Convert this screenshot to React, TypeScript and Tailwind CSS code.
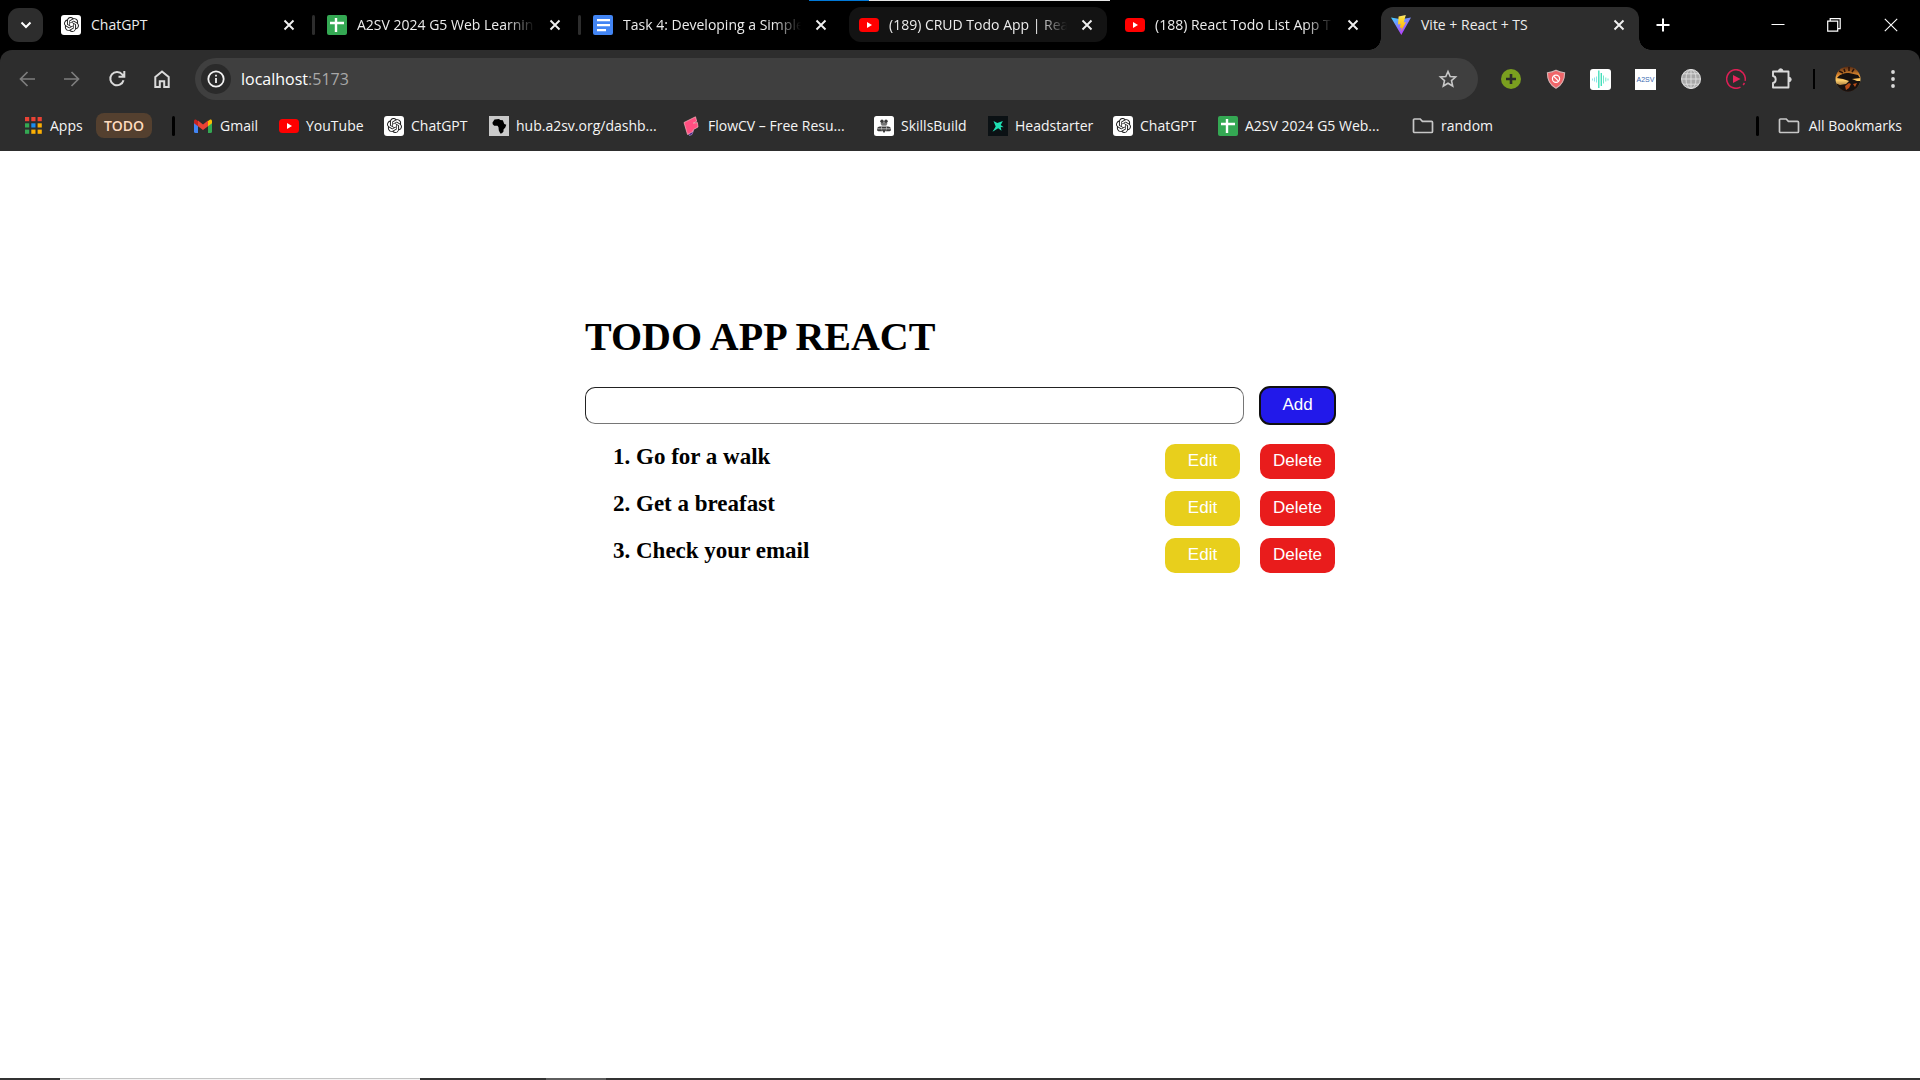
import React, { useState } from "react";
import { SiOpenai } from "react-icons/si";

function ChatGptIcon() {
  return (
    <span className="grid size-5 shrink-0 place-items-center rounded-[3px] bg-white text-[#1d1d1d]">
      <SiOpenai size={15} />
    </span>
  );
}

function SheetsIcon() {
  return (
    <svg viewBox="0 0 20 20" className="size-5 shrink-0">
      <rect width="20" height="20" rx="2" fill="#34a853" />
      <path d="M9 3v14M3 8h14" stroke="#fff" strokeWidth="2.4" />
    </svg>
  );
}

function DocsIcon() {
  return (
    <svg viewBox="0 0 20 20" className="size-5 shrink-0">
      <rect width="20" height="20" rx="2" fill="#4285f4" />
      <path d="M4 5.2h13M4 10.2h13M4 15.2h9" stroke="#fff" strokeWidth="2.2" />
    </svg>
  );
}

function YouTubeIcon() {
  return (
    <svg viewBox="0 0 20 20" className="size-5 shrink-0">
      <rect y="3" width="20" height="14" rx="3.5" fill="#f00" />
      <path d="M8 7l5 3-5 3z" fill="#fff" />
    </svg>
  );
}

function ViteIcon() {
  return (
    <svg viewBox="0 0 20 20" className="size-5 shrink-0">
      <defs>
        <linearGradient id="viteBody" x1="0" y1="0" x2="0.6" y2="1">
          <stop offset="0" stopColor="#41d1ff" />
          <stop offset="1" stopColor="#bd34fe" />
        </linearGradient>
        <linearGradient id="viteBolt" x1="0" y1="0" x2="0" y2="1">
          <stop offset="0" stopColor="#ffea83" />
          <stop offset="0.2" stopColor="#ffdd35" />
          <stop offset="1" stopColor="#ffa800" />
        </linearGradient>
      </defs>
      <path d="M0 2.6l10 1.6L20 2.6 10.3 20z" fill="url(#viteBody)" />
      <path d="M14.8 0L7.6 1.4 7 9.4l2.6-.5-.8 4 2-.5-.7 4.2 4.9-9.6-2.3.4z" fill="url(#viteBolt)" />
    </svg>
  );
}

function GmailIcon() {
  return (
    <svg viewBox="0 0 20 20" className="size-5 shrink-0">
      <path d="M1 5.5v10A1.5 1.5 0 0 0 2.5 17H5V9z" fill="#4285f4" />
      <path d="M19 5.5v10A1.5 1.5 0 0 1 17.5 17H15V9z" fill="#34a853" />
      <path d="M15 5l1.8-1.3C17.8 3 19 3.8 19 5v2.2L15 10.2z" fill="#fbbc04" />
      <path d="M5 5L3.2 3.7C2.2 3 1 3.8 1 5v2.2l4 3z" fill="#c5221f" />
      <path d="M5 10.2V4.6l5 3.9 5-3.9v5.6L10 14z" fill="#ea4335" />
    </svg>
  );
}

function AfricaIcon() {
  return (
    <svg viewBox="0 0 20 20" className="size-5 shrink-0">
      <rect width="20" height="20" fill="#c9c9c9" />
      <path d="M3.500 6.500l2-3L10 3l1.200 1 2.600.3 1.500 3.700 2 .8-1 2.600-1.800 2v2.100L13 17.300l-1.700.3-1.500-3-.3-3.300-1-1.500H5.200L3.700 8.300z" fill="#000" />
    </svg>
  );
}

function FlowIcon() {
  return (
    <svg viewBox="0 0 20 20" className="size-5 shrink-0">
      <path d="M7 17l5.5-2.500-1.500 4-2.500 1z" fill="#3d1a78" stroke="#c9a6e8" strokeWidth=".6" />
      <path d="M3 6.500L14.500.8l1.200 4.500-3.500 1.900 4.200-.7.600 4.500L12.500 13.500l-1 2.300-5 2.700z" fill="#ff4f81" stroke="#ffb3bd" strokeWidth=".7" />
    </svg>
  );
}

function SkillsIcon() {
  return (
    <svg viewBox="0 0 20 20" className="size-5 shrink-0">
      <rect width="20" height="20" rx="2.5" fill="#fff" />
      <g fill="#3a3a3a">
        <circle cx="8" cy="5.2" r="1.7" />
        <circle cx="12" cy="5.2" r="1.7" />
        <rect x="6.8" y="6.6" width="6.4" height="2.4" rx="1" />
        <path d="M3 13.800c0-2.600 1.600-3.600 4-3.200l1 4.600H4.400A1.400 1.400 0 0 1 3 13.800zM17 13.800c0-2.600-1.600-3.600-4-3.200l-1 4.600h3.600a1.400 1.400 0 0 0 1.400-1.400z" />
        <path d="M7.600 9.600h4.800v4.200L10 17l-2.400-3.200z" />
      </g>
      <path d="M3 12.800h14M7 8h6M8 10.400h4" stroke="#fff" strokeWidth=".6" />
    </svg>
  );
}

function HeadstarterIcon() {
  return (
    <svg viewBox="0 0 20 20" className="size-5 shrink-0">
      <rect width="20" height="20" fill="#0b1114" />
      <path d="M5.500 5l3.800 2 5.600-2-2.200 4 3 2.300-3-.2.8 3.700-3.300-2.600-5.700 3.500 3.200-5.200z" fill="#1fe0b3" />
    </svg>
  );
}

function FolderIcon() {
  return (
    <svg viewBox="0 0 22 20" className="h-5 w-[22px] shrink-0" fill="none" stroke="#c7c7c7" strokeWidth="1.7">
      <path d="M1.500 4a1 1 0 0 1 1-1h5.700l2.200 2.400h9.100a1 1 0 0 1 1 1v9.100a1 1 0 0 1-1 1h-17a1 1 0 0 1-1-1z" />
    </svg>
  );
}

function AppsIcon() {
  const colors = ["#ea4335", "#ea4335", "#ea4335", "#34a853", "#1a8cf0", "#fbaf04", "#34a853", "#fbaf04", "#fbaf04"];
  return (
    <svg viewBox="0 0 17 17" className="size-[17px] shrink-0">
      {colors.map((c, i) => (
        <rect key={i} x={(i % 3) * 6.3} y={Math.floor(i / 3) * 6.3} width="4.2" height="4.2" fill={c} />
      ))}
    </svg>
  );
}

function CloseIcon() {
  return (
    <svg viewBox="0 0 12 12" className="size-3" stroke="#f0f0f0" strokeWidth="1.9">
      <path d="M1.500 1.500l9 9M10.500 1.500l-9 9" />
    </svg>
  );
}

const tabs = [
  { icon: <ChatGptIcon />, title: "ChatGPT", kind: "plain", sep: true, fade: false },
  { icon: <SheetsIcon />, title: "A2SV 2024 G5 Web Learnin", kind: "plain", sep: true, fade: true },
  { icon: <DocsIcon />, title: "Task 4: Developing a Simple", kind: "plain", sep: false, fade: true },
  { icon: <YouTubeIcon />, title: "(189) CRUD Todo App | Rea", kind: "hover", sep: false, fade: true },
  { icon: <YouTubeIcon />, title: "(188) React Todo List App T", kind: "plain", sep: false, fade: true },
  { icon: <ViteIcon />, title: "Vite + React + TS", kind: "active", sep: false, fade: false },
];

function Tab({ tab }: { tab: (typeof tabs)[number] }) {
  const active = tab.kind === "active";
  return (
    <div className={"relative flex h-[43px] max-w-[266px] min-w-0 flex-1 items-start " + (active ? "z-10" : "")}>
      <div
        className={
          "mr-2 flex w-full min-w-0 items-center pr-3 pl-[10px] " +
          (active
            ? "h-[43px] rounded-t-[12px] bg-[#2d2d2d] pb-2"
            : tab.kind === "hover"
              ? "h-[35px] rounded-[12px] bg-[#131313]"
              : "h-[35px]")
        }
      >
        {tab.icon}
        <span
          className={
            "ml-[10px] min-w-0 flex-1 whitespace-nowrap " +
            (tab.fade ? "[mask-image:linear-gradient(to_right,black_calc(100%-28px),transparent)]" : "")
          }
        >
          {tab.title}
        </span>
        <button aria-label={"Close " + tab.title} className="ml-3 grid h-5 w-4 shrink-0 place-items-center">
          <CloseIcon />
        </button>
      </div>
      {tab.sep && <i className="absolute top-2 right-[2px] h-5 w-[3px] rounded bg-[#2d2d2d]" />}
      {active && (
        <>
          <i className="absolute bottom-0 -left-3 size-3 bg-[radial-gradient(circle_at_0_0,transparent_11.5px,#2d2d2d_12px)]" />
          <i className="absolute right-[-4px] bottom-0 size-3 bg-[radial-gradient(circle_at_100%_0,transparent_11.5px,#2d2d2d_12px)]" />
        </>
      )}
    </div>
  );
}

function TabStrip() {
  return (
    <header className="flex h-[50px] bg-black pt-[7px] text-sm text-[#ececec]">
      <button aria-label="Search tabs" className="mt-px mr-2 ml-2 grid h-[34px] w-[35px] shrink-0 place-items-center rounded-[11px] bg-[#2d2d2d]">
        <svg viewBox="0 0 12 8" className="h-2 w-3" fill="none" stroke="#fff" strokeWidth="2">
          <path d="M1.500 1.500L6 6l4.500-4.500" />
        </svg>
      </button>
      {tabs.map((t) => (
        <Tab key={t.title} tab={t} />
      ))}
      <button aria-label="New tab" className="grid h-9 w-8 shrink-0 place-items-center">
        <svg viewBox="0 0 14 14" className="size-[14px]" stroke="#fff" strokeWidth="2">
          <path d="M7 .5v13M.5 7h13" />
        </svg>
      </button>
      <div className="ml-auto flex h-9 shrink-0 items-center">
        <button aria-label="Minimize" className="grid h-9 w-14 place-items-center">
          <svg viewBox="0 0 14 14" className="size-[14px]" stroke="#fff">
            <path d="M.5 6.500h13" />
          </svg>
        </button>
        <button aria-label="Restore" className="grid h-9 w-14 place-items-center">
          <svg viewBox="0 0 14 14" className="size-[14px]" fill="none" stroke="#fff" strokeWidth="1.2">
            <path d="M.7 3.200h10v10h-10zM3.200 3V.7h10v10H11" />
          </svg>
        </button>
        <button aria-label="Close window" className="grid h-9 w-[58px] place-items-center">
          <svg viewBox="0 0 14 14" className="size-[14px]" stroke="#fff" strokeWidth="1.1">
            <path d="M.8.8l12.400 12.400M13.200.8L.8 13.200" />
          </svg>
        </button>
      </div>
    </header>
  );
}

function ToolButton({ label, children }: { label: string; children: React.ReactNode }) {
  return (
    <button aria-label={label} className="grid h-9 w-[45px] shrink-0 place-items-center">
      {children}
    </button>
  );
}

function Stroke({ children, color = "#dadada" }: { children: React.ReactNode; color?: string }) {
  return (
    <svg viewBox="0 0 20 20" className="size-5" fill="none" stroke={color} strokeWidth="2">
      {children}
    </svg>
  );
}

function Toolbar() {
  return (
    <div className="flex h-[50px] items-center rounded-t-[12px] bg-[#2d2d2d] pt-2 pr-[5px] pl-1">
      <ToolButton label="Back">
        <Stroke color="#7d7d7d"><path d="M18 10H4M10.500 3L3.500 10l7 7" strokeWidth="1.7" /></Stroke>
      </ToolButton>
      <ToolButton label="Forward">
        <Stroke color="#7d7d7d"><path d="M2 10h14M9.500 3l7 7-7 7" strokeWidth="1.7" /></Stroke>
      </ToolButton>
      <ToolButton label="Reload">
        <Stroke><path d="M16.500 11.200A6.700 6.700 0 1 1 15.300 5.500L17 7.400M17.300 2v5.800h-5.800" /></Stroke>
      </ToolButton>
      <ToolButton label="Home">
        <Stroke><path d="M3.300 8L10 2.500 16.700 8v10h-4.500v-5.800H7.800V18H3.300z" /></Stroke>
      </ToolButton>
      <div className="ml-[11px] flex h-[42px] min-w-0 flex-1 items-center rounded-full bg-[#3f3f3f] pl-[6px]">
        <button aria-label="Site information" className="grid size-[30px] place-items-center rounded-full bg-[#2a2a2a]">
          <svg viewBox="0 0 18 18" className="size-[18px]" fill="none" stroke="#f2f2f2" strokeWidth="1.8">
            <circle cx="9" cy="9" r="7.7" />
            <path d="M9 8v5M9 4.800v1.800" />
          </svg>
        </button>
        <span className="ml-[10px] text-base text-white">
          localhost<span className="text-[#a8a8a8]">:5173</span>
        </span>
        <button aria-label="Bookmark this tab" className="mr-5 ml-auto grid size-5 place-items-center">
          <svg viewBox="0 0 20 20" className="size-5" fill="none" stroke="#c7c7c7" strokeWidth="1.6">
            <path d="M10 2.500l2.200 5 5.400.5-4.100 3.600 1.200 5.400L10 14.200 5.300 17l1.200-5.400L2.400 8l5.400-.5z" />
          </svg>
        </button>
      </div>
      <div className="ml-[10px] flex items-center">
        <ToolButton label="Add extension">
          <svg viewBox="0 0 20 20" className="size-5">
            <circle cx="10" cy="10" r="10" fill="#7a9f1f" />
            <path d="M10 5v10M5 10h10" stroke="#2b2b2b" strokeWidth="2.6" />
          </svg>
        </ToolButton>
        <ToolButton label="Ad blocker">
          <svg viewBox="0 0 20 20" className="size-5">
            <path d="M10 1.200c2.600 1.400 5.300 2.200 8.600 2.600 0 6.600-1.600 11.800-8.600 15.400C3 15.600 1.400 10.400 1.400 3.800 4.700 3.400 7.400 2.600 10 1.200z" fill="#f0666a" stroke="#d3b5b5" strokeWidth="1.1" />
            <circle cx="10" cy="9.700" r="3.600" fill="none" stroke="#fff" strokeWidth="1.2" />
            <path d="M7.500 7.200l5 5" stroke="#fff" strokeWidth="1.2" />
          </svg>
        </ToolButton>
        <ToolButton label="Voice extension">
          <svg viewBox="0 0 21 21" className="size-[21px]">
            <rect width="21" height="21" rx="3" fill="#fff" />
            <path d="M2.500 9.500v2M4.500 8.500v4M6.500 7.500v6" stroke="#8be4e6" />
            <path d="M8.800 1.500v17.500M11.300 4v13" stroke="#45dfbb" strokeWidth="1.4" />
            <path d="M13.500 6.500v8M15.800 8.500v4M18 9.500v2" stroke="#74e6cb" />
          </svg>
        </ToolButton>
        <ToolButton label="A2SV extension">
          <span className="grid size-[21px] place-items-center bg-white font-['Liberation_Sans'] text-[7px] leading-none text-[#3a6ab0]">
            A2SV
          </span>
        </ToolButton>
        <ToolButton label="Web extension">
          <svg viewBox="0 0 20 20" className="size-5">
            <circle cx="10" cy="10" r="10" fill="#a8a8a8" />
            <g fill="none" stroke="#e0e0e0" strokeWidth=".9">
              <ellipse cx="10" cy="10" rx="5" ry="9.600" />
              <path d="M10 0v20M0 10h20M2 4.800h16M2 15.200h16" />
              <circle cx="10" cy="10" r="9.400" />
            </g>
          </svg>
        </ToolButton>
        <ToolButton label="Video extension">
          <svg viewBox="0 0 20 20" className="size-5">
            <path d="M14.500 18.100A9.300 9.300 0 1 1 19.100 11.800M18.500 14l-1.300 2" fill="none" stroke="#dc1f55" strokeWidth="1.5" />
            <path d="M7 6l7.500 4L7 14z" fill="#e8245c" />
          </svg>
        </ToolButton>
        <ToolButton label="Extensions">
          <svg viewBox="0 0 22 22" className="size-[22px]">
            <path d="M3 3.500h15.500v16H3v-4.500c3.600-.5 3.600-6.500 0-7z" fill="none" stroke="#dadada" strokeWidth="1.9" strokeLinejoin="round" />
            <path d="M8.500 3a2.200 2.200 0 0 1 4.400 0zM19 9.300a2.200 2.200 0 0 1 0 4.400z" fill="#dadada" stroke="#dadada" />
          </svg>
        </ToolButton>
        <i className="mx-[10px] h-5 w-[2px] bg-black" />
        <button aria-label="Profile" className="grid h-9 w-[45px] place-items-center">
          <svg viewBox="0 0 26 26" className="size-[26px]">
            <defs>
              <clipPath id="avatarClip"><circle cx="13" cy="13" r="12.5" /></clipPath>
              <linearGradient id="avatarSky" x1="0" y1="0" x2="0" y2="1">
                <stop offset="0" stopColor="#4a2210" />
                <stop offset=".35" stopColor="#e08a2e" />
                <stop offset=".55" stopColor="#ffcf6b" />
                <stop offset="1" stopColor="#3a1509" />
              </linearGradient>
            </defs>
            <g clipPath="url(#avatarClip)">
              <rect width="26" height="26" fill="url(#avatarSky)" />
              <path d="M2 12c2-3 6-5 12-5l9 2 2 3-8 1 5 2 4 0v11H0v-9l5 2 6-1 3-3-6-2z" fill="#17110f" />
              <path d="M10 20l4-3 2 1-2 4-3 2zM18 18l4-1-2 4z" fill="#b94d18" />
              <path d="M4 5l4 2M9 3l1 3M14 1l0 4M19 3l-2 3" stroke="#2b130a" strokeWidth="1.5" />
            </g>
          </svg>
        </button>
        <ToolButton label="Menu">
          <svg viewBox="0 0 20 20" className="size-5" fill="#dadada">
            <circle cx="10" cy="3" r="1.9" />
            <circle cx="10" cy="10" r="1.9" />
            <circle cx="10" cy="17" r="1.9" />
          </svg>
        </ToolButton>
      </div>
    </div>
  );
}

const bookmarks = [
  { label: "Gmail", icon: <GmailIcon />, width: "w-[86px]" },
  { label: "YouTube", icon: <YouTubeIcon />, width: "w-[105px]" },
  { label: "ChatGPT", icon: <ChatGptIcon />, width: "w-[105px]" },
  { label: "hub.a2sv.org/dashb...", icon: <AfricaIcon />, width: "w-[192px]" },
  { label: "FlowCV – Free Resu...", icon: <FlowIcon />, width: "w-[193px]" },
  { label: "SkillsBuild", icon: <SkillsIcon />, width: "w-[114px]" },
  { label: "Headstarter", icon: <HeadstarterIcon />, width: "w-[125px]" },
  { label: "ChatGPT", icon: <ChatGptIcon />, width: "w-[105px]" },
  { label: "A2SV 2024 G5 Web...", icon: <SheetsIcon />, width: "w-[194px]" },
  { label: "random", icon: <FolderIcon />, width: "w-[90px]" },
];

function BookmarksBar() {
  return (
    <nav className="flex h-[51px] items-center bg-[#2d2d2d] pr-[18px] pl-[25px] text-sm whitespace-nowrap text-[#f5f5f5]">
      <a href="#apps" className="flex w-[71px] shrink-0 items-center gap-2">
        <AppsIcon />
        Apps
      </a>
      <button className="h-[25px] w-14 shrink-0 rounded-[8px] bg-[#54402f] font-semibold text-[#ffdcbf]">TODO</button>
      <i className="mr-[18px] ml-5 h-5 w-[3px] shrink-0 rounded bg-black" />
      {bookmarks.map((b, i) => (
        <a key={i} href={"#bookmark-" + i} className={"flex shrink-0 items-center gap-[7px] " + b.width}>
          {b.icon}
          {b.label}
        </a>
      ))}
      <i className="mr-[19px] ml-auto h-5 w-[3px] shrink-0 rounded bg-black" />
      <a href="#all" className="flex shrink-0 items-center gap-[9px]">
        <FolderIcon />
        All Bookmarks
      </a>
    </nav>
  );
}

const initialTodos = ["Go for a walk", "Get a breafast", "Check your email"];

function TodoApp() {
  const [todos, setTodos] = useState(initialTodos);
  const [text, setText] = useState("");
  const add = (e: React.FormEvent) => {
    e.preventDefault();
    if (text.trim()) {
      setTodos([...todos, text.trim()]);
      setText("");
    }
  };
  return (
    <main className="mx-auto w-full max-w-[750px] flex-1 pt-[163px] font-['Liberation_Serif',serif] text-black">
      <h1 className="text-[40px] leading-[46px] font-bold">TODO APP REACT</h1>
      <form onSubmit={add} className="-mr-px mt-[26px] flex items-center gap-[15px]">
        <input
          aria-label="New todo"
          value={text}
          onChange={(e) => setText(e.target.value)}
          className="h-[37px] min-w-0 flex-1 rounded-[10px] border border-t-[#222] border-r-[#767676] border-b-[#767676] border-l-[#222] px-3 font-['Liberation_Sans',sans-serif] text-[17px] outline-none"
        />
        <button className="h-[39px] w-[77px] rounded-[11px] border-2 border-[#101010] bg-[#2219ea] pb-[2px] font-['Liberation_Sans',sans-serif] text-[17px] text-white">
          Add
        </button>
      </form>
      <ol className="mt-[19px] grid gap-3">
        {todos.map((todo, i) => (
          <li key={i} className="flex h-[35px] items-start pl-7">
            <h3 className="flex-1 text-[23px] leading-[26px] font-bold">
              {i + 1}. {todo}
            </h3>
            <div className="flex gap-5 font-['Liberation_Sans',sans-serif] text-[17px] text-white">
              <button className="h-[35px] w-[75px] rounded-[10px] bg-[#e8cf1c] pb-[2px]">Edit</button>
              <button
                className="h-[35px] w-[75px] rounded-[10px] bg-[#e91c1c] pb-[2px]"
                onClick={() => setTodos(todos.filter((_, k) => k !== i))}
              >
                Delete
              </button>
            </div>
          </li>
        ))}
      </ol>
    </main>
  );
}

export default function App() {
  return (
    <div className="relative flex min-h-screen flex-col bg-white font-['Open_Sans',sans-serif]">
      <div className="absolute top-0 left-[809px] z-20 flex h-px w-[301px] bg-[#e6e6e6]">
        <i className="w-[60px] bg-[#0078d7]" />
      </div>
      <div className="bg-black">
        <TabStrip />
        <Toolbar />
        <BookmarksBar />
      </div>
      <TodoApp />
      <footer className="flex h-[2px] bg-[#333]">
        <i className="w-[60px]" />
        <i className="w-[360px] border-t border-[#c4c4c4] bg-[#f3f3f3]" />
        <i className="ml-[126px] w-[60px] bg-[#5e5e5e]" />
      </footer>
    </div>
  );
}
